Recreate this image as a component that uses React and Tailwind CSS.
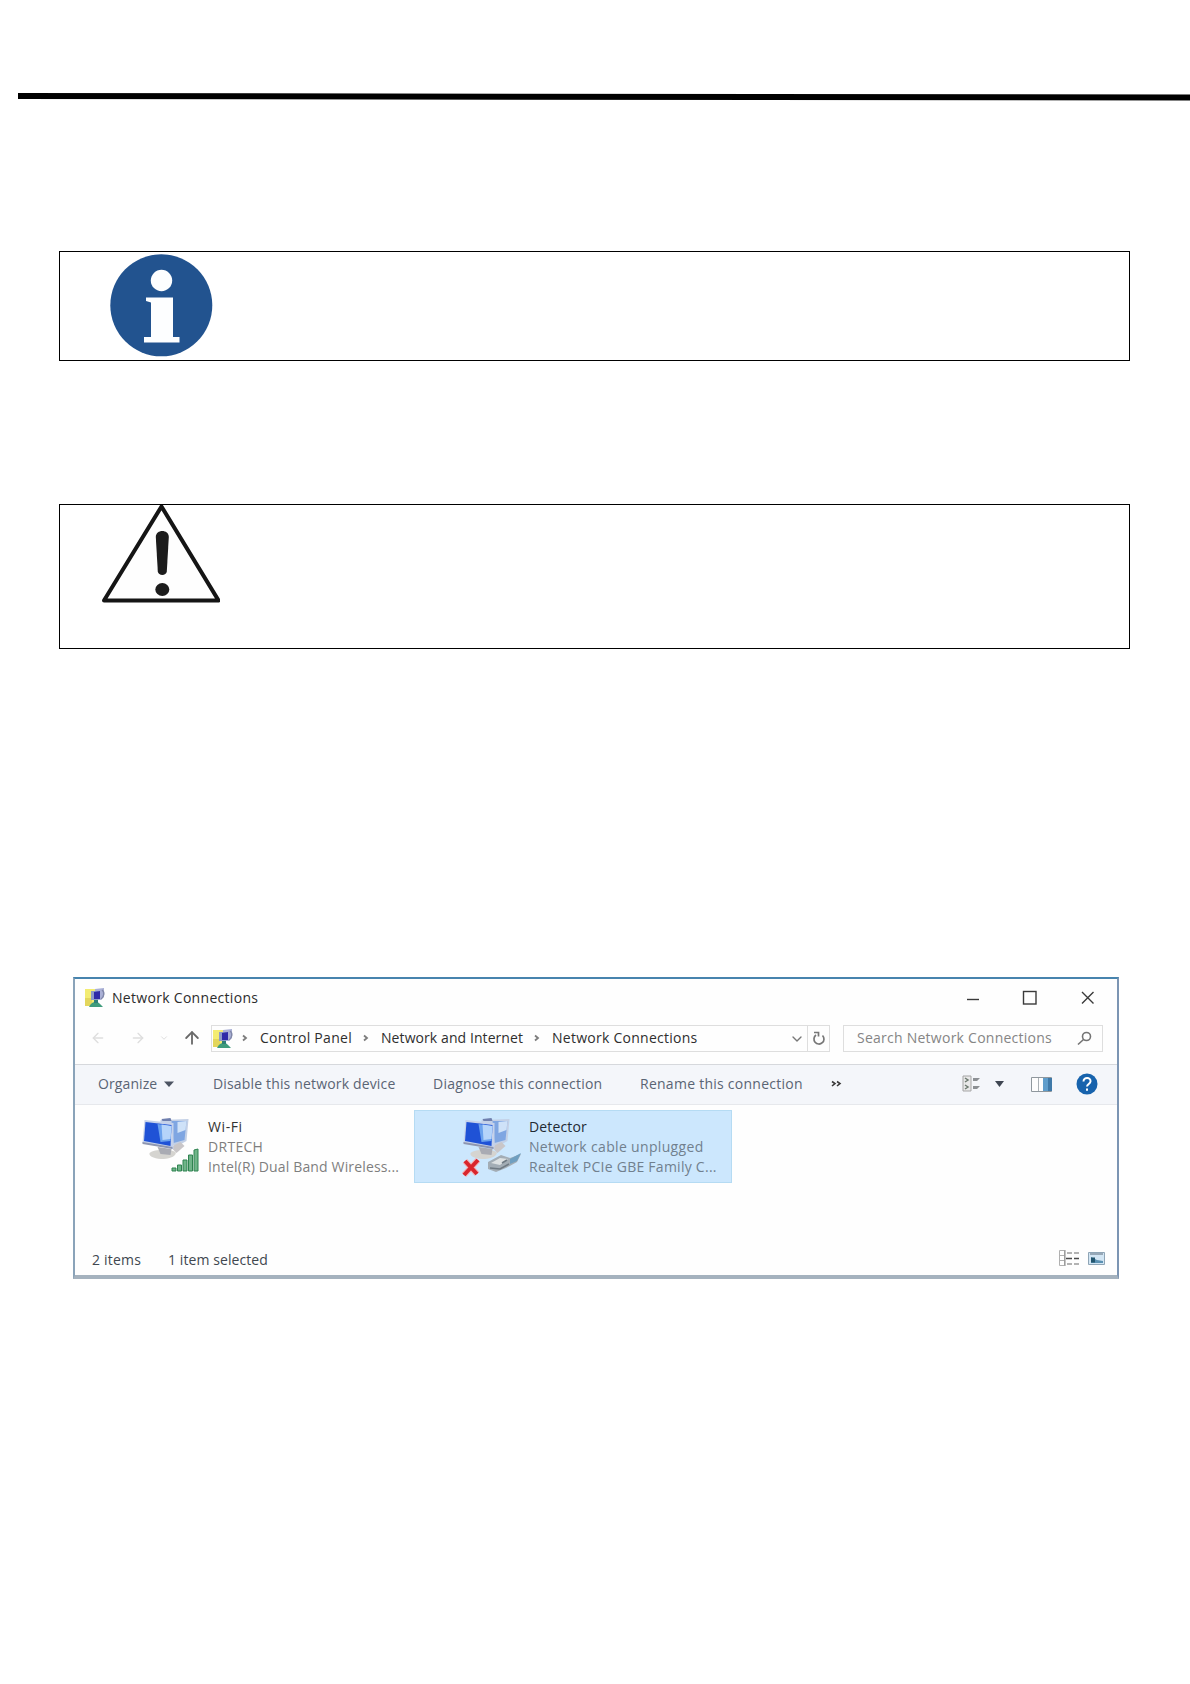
import { ArrowLeft, ArrowRight, ArrowUp, ChevronDown } from 'lucide-react';

const crumbs = [
  { name: 'Control Panel', width: 'w-[121px]', tracking: 'tracking-[0.28px]' },
  { name: 'Network and Internet', width: 'w-[171px]', tracking: 'tracking-[0.08px]' },
  { name: 'Network Connections', width: 'w-[180px]', tracking: 'tracking-[0.26px]' },
];

const commands = [
  { name: 'Disable this network device', width: 'w-[220px]', tracking: 'tracking-[0.16px]' },
  { name: 'Diagnose this connection', width: 'w-[207px]', tracking: 'tracking-[0.22px]' },
  { name: 'Rename this connection', width: 'w-[190px]', tracking: 'tracking-[0.26px]' },
];

function InfoIcon() {
  return (
    <svg width="104" height="104" viewBox="0 0 104 104">
      <circle cx="52.300" cy="52.300" r="51" fill="#22538f" />
      <circle cx="52.500" cy="27.500" r="10.700" fill="#fdfeff" />
      <path d="M37 44.500h27v39.500h6.500v5.500H35v-5.500h7V49.500l-5-1.500z" fill="#fdfeff" />
    </svg>
  );
}

function WarningIcon() {
  return (
    <svg width="118" height="98" viewBox="0 0 118 98">
      <path d="M2 95.500L59.500 1.500L116.500 95.500z" fill="#fefefe" stroke="#151515" strokeWidth="4" strokeLinejoin="round" />
      <path d="M53.800 32c0-8 13-8 13 0l-2 34.500c-.5 4.500-8.500 4.500-9 0z" fill="#1c1c1c" />
      <ellipse cx="60.300" cy="84.500" rx="7" ry="6.500" fill="#1c1c1c" />
    </svg>
  );
}

function NetworkIcon() {
  return (
    <svg width="22" height="22" viewBox="0 0 22 22" className="shrink-0">
      <rect x="1" y="2" width="12" height="17" fill="#f3ec72" />
      <rect x="1" y="11" width="7" height="8" fill="#e3d65c" />
      <path d="M11 2l9-1v9l-3 3h-6z" fill="#aab0d6" />
      <path d="M7 4h7v9H7z" fill="#8d9cc8" />
      <path d="M10 5l6-1v8h-6z" fill="#2f2ba8" />
      <path d="M18 3c3 2 2 7-1 9" fill="none" stroke="#8087a8" strokeWidth="1.500" />
      <path d="M5 20c2-4 4-5 7-5s4 2 7 5z" fill="#3f9c7c" />
      <path d="M10 13h4v3h-4z" fill="#2f7f78" />
    </svg>
  );
}

function Computers() {
  return (
    <g transform="translate(1.500 0)">
      <path d="M18 2l28-1-2 22-9 5-17-3z" fill="#c3d0e6" />
      <path d="M29 3l15 0-2 19-11 3z" fill="#7fa6e2" />
      <path d="M35 4l9-1-1 9-8 3z" fill="#cfe2f8" />
      <path d="M19 1l9-1 1 3h-9z" fill="#6f7fae" />
      <path d="M7 35c5-4 20-4 26-1 2 3-5 7-12 7S6 39 7 35z" fill="#d5d4d0" />
      <path d="M15 29l14 2-1 6-10-1z" fill="#a9abb3" />
      <path d="M28 29l10-5 4 4-8 7z" fill="#c9c6c8" />
      <path d="M2 2l29 3v26L0 25z" fill="#c6d2ea" />
      <path d="M3 4l26 3-1 21L1.500 23z" fill="#1f52d6" />
      <path d="M15 6l14 2-1 15-10 1z" fill="#6ba2ee" />
      <path d="M19 6.500l10 1.500-1 13-8 1z" fill="#b5d4fa" />
      <path d="M0 24l30 5v2L0 26z" fill="#8e96b0" />
    </g>
  );
}

function WifiIcon() {
  return (
    <svg width="60" height="58" viewBox="0 0 60 58" className="shrink-0">
      <Computers />
      <path d="M31 50h4v3h-4zM36.500 47h4v6h-4zM42 42h4v11h-4zM47.500 37h4v16h-4zM53 32l4-1v22h-4z" fill="#6fb488" stroke="#2f8350" />
    </svg>
  );
}

function UnpluggedIcon() {
  return (
    <svg width="60" height="60" viewBox="0 0 60 60" className="shrink-0">
      <Computers />
      <path d="M26 44l13-7 9 3 11-4-4 8-11 6-10 4-8-3z" fill="#a3adb5" />
      <path d="M29 45l9-5 8 1-8 6z" fill="#dde1e2" />
      <path d="M48 41l11-6-4 8-7 3z" fill="#6f9fc0" />
      <path d="M28 50l10 1 9-5M40 45l5-3" fill="none" stroke="#6f7a83" strokeWidth="1.500" />
      <path d="M3 43l12 13M16 42L2 57" stroke="#f3b3b6" strokeWidth="6" />
      <path d="M3 43l12 13M16 42L2 57" stroke="#d9252c" strokeWidth="4" />
    </svg>
  );
}

function TitleBar() {
  return (
    <div className="flex h-[37px] items-center pr-[16px] pl-[9px] text-[#2c2c2c]">
      <NetworkIcon />
      <span className="ml-[6px] flex-1 tracking-[0.3px] whitespace-nowrap">Network Connections</span>
      <svg width="140" height="20" viewBox="0 0 140 20" fill="none" stroke="#3a3a3a" strokeWidth="1.400">
        <path d="M6 11.500h12" />
        <rect x="62.500" y="3.500" width="12.500" height="12.500" />
        <path d="M121 4l11.500 11.500M132.500 4l-11.500 11.500" />
      </svg>
    </div>
  );
}

function AddressBar() {
  return (
    <div className="flex h-[48px] items-start pt-[9px]">
      <div className="flex h-[27px] w-[136px] shrink-0 items-center pb-[1px] pl-[15px]">
        <ArrowLeft size={16} color="#dedede" strokeWidth={2} />
        <ArrowRight size={16} color="#dedede" strokeWidth={2} className="ml-[24px]" />
        <ChevronDown size={10} color="#d8d8d8" className="ml-[13px]" />
        <ArrowUp size={20} color="#6a6a6a" strokeWidth={2.2} className="ml-[13px] shrink-0" />
      </div>
      <div className="flex h-[27px] w-[619px] shrink-0 items-center border border-[#dedede] text-[#2e2e2e]">
        <NetworkIcon />
        <div className="-ml-[1px] flex flex-1 pb-[2px]">
          {crumbs.map((c) => (
            <div key={c.name} className={`flex shrink-0 items-center ${c.width}`}>
              <svg width="27" height="10" viewBox="0 0 27 10" className="shrink-0">
                <path d="M10 2.500l3 2.500-3 2.500" fill="none" stroke="#7c7c7c" strokeWidth="1.800" />
              </svg>
              <span className={`whitespace-nowrap ${c.tracking}`}>{c.name}</span>
            </div>
          ))}
        </div>
        <ChevronDown size={16} color="#777777" className="shrink-0" />
        <div className="ml-[2px] flex h-full w-[22px] shrink-0 items-center justify-center border-l border-[#dedede]">
          <svg width="14" height="15" viewBox="0 0 14 15" fill="none" stroke="#777777" strokeWidth="1.700">
            <path d="M10.500 4.500A5 5 0 1 1 4 4M2 1.500h4.500v4" />
          </svg>
        </div>
      </div>
      <div className="ml-[13px] flex h-[27px] w-[260px] items-center border border-[#dedede] pr-[10px] pb-[1px] pl-[13px] text-[#858585]">
        <span className="flex-1 tracking-[0.25px] whitespace-nowrap">Search Network Connections</span>
        <svg width="15" height="15" viewBox="0 0 15 15" fill="none" stroke="#747474" strokeWidth="1.600">
          <circle cx="9.500" cy="5.500" r="4" />
          <path d="M6.500 8.500L1 13.500" />
        </svg>
      </div>
    </div>
  );
}

function Toolbar() {
  return (
    <div className="flex h-[41px] items-center border-y border-t-[#d6d8dc] border-b-[#e6e8ec] bg-[#f4f6fa] pb-[2px] pl-[23px] text-[#5a6474]">
      <div className="flex w-[115px] items-center gap-[7px]">
        <span className="tracking-[0.1px] whitespace-nowrap">Organize</span>
        <svg width="10" height="6" viewBox="0 0 10 6">
          <path d="M0 .5h10L5 6z" fill="#4c5462" />
        </svg>
      </div>
      {commands.map((c) => (
        <span key={c.name} className={`shrink-0 whitespace-nowrap ${c.width} ${c.tracking}`}>
          {c.name}
        </span>
      ))}
      <svg width="12" height="8" viewBox="0 0 12 8" fill="none" stroke="#3a3a3a" strokeWidth="1.600">
        <path d="M2 1.500l3 2L2 6M7 1.500l3 2L7 6" />
      </svg>
      <svg width="144" height="24" viewBox="0 0 144 24" className="ml-[119px]">
        <path d="M2 4h8v15H2z" fill="#e9e9e9" stroke="#a5a5a5" />
        <path d="M4 6l3 2-3 2M4 13l3 2-3 2" fill="none" stroke="#6d7a70" strokeWidth="1.500" />
        <path d="M12 6h7l-3 3h-4zM12 14h7l-3 3h-4z" fill="#8c9094" />
        <path d="M34 9h9l-4.500 6z" fill="#3f4652" />
        <path d="M70.500 5.500h20v14h-20z" fill="#fdfdfd" stroke="#8f979d" />
        <path d="M77.500 6v13" stroke="#aab0b5" />
        <path d="M82 6h9v13h-9z" fill="#5f9dcb" />
        <path d="M87 6h4v13h-4z" fill="#3f79a8" />
        <circle cx="126" cy="12" r="10.500" fill="#1763ad" />
        <path d="M122.500 9.500c0-5 7.500-4.500 7 0-.3 2.500-3.200 2.500-3.500 5M126 16.500v2.200" fill="none" stroke="#fff" strokeWidth="2" />
      </svg>
    </div>
  );
}

function Connections() {
  return (
    <div className="flex h-[138px] items-start pt-[5px] leading-5">
      <div className="flex h-[73px] w-[339px] shrink-0 pt-[8px] pl-[66px]">
        <WifiIcon />
        <div className="ml-[7px] whitespace-nowrap text-[#7e7e7e]">
          <p className="-mt-[1px] tracking-[0.6px] text-[#333333]">Wi-Fi</p>
          <p className="tracking-[0.3px]">DRTECH</p>
          <p className="tracking-[0.15px]">Intel(R) Dual Band Wireless...</p>
        </div>
      </div>
      <div className="flex h-[73px] w-[318px] shrink-0 border border-[#b5dbf3] bg-[#cce7fd] pt-[7px] pl-[47px]">
        <UnpluggedIcon />
        <div className="ml-[7px] whitespace-nowrap text-[#71808e]">
          <p className="-mt-[1px] tracking-[0.15px] text-[#1f2a33]">Detector</p>
          <p className="tracking-[0.33px]">Network cable unplugged</p>
          <p className="tracking-[0.26px]">Realtek PCIe GBE Family C...</p>
        </div>
      </div>
    </div>
  );
}

function StatusBar() {
  return (
    <div className="flex h-[32px] items-center pt-[1px] pr-[9px] pl-[17px] text-[#40474f]">
      <span className="w-[76px] tracking-[0.2px] whitespace-nowrap">2 items</span>
      <span className="flex-1 tracking-[0.08px] whitespace-nowrap">1 item selected</span>
      <svg width="51" height="18" viewBox="0 0 51 18" className="mb-[3px]">
        <path d="M2.500 1.500h5v15h-5zM2.500 6.500h5M2.500 11.500h5" fill="#fff" stroke="#b0b0b0" />
        <path d="M8 1v16" stroke="#8a8a8a" />
        <path d="M10 4h5M17 4h5M10 15h5M17 15h5" stroke="#9a9a9a" strokeWidth="1.300" />
        <path d="M9 9.500h6M17 9.500h5" stroke="#4a4a4a" strokeWidth="1.600" />
        <path d="M31.500 3.500h16v12h-16z" fill="#d3e6f4" stroke="#8fa5b6" />
        <path d="M33 5h13" stroke="#8393a3" strokeWidth="1.500" />
        <path d="M34 14V8l6 3 6 1v2z" fill="#5b91b3" />
        <path d="M34 8.500h4v5h-4z" fill="#23566f" />
      </svg>
    </div>
  );
}

export default function App() {
  return (
    <div className="h-[1684px] w-[1190px] overflow-hidden bg-white pt-[92px] font-['Open_Sans',sans-serif]">
      {/* Header rule */}
      <svg width="1190" height="10" viewBox="0 0 1190 10" className="block">
        <path d="M18 1L1190 2.600V8.600L18 7z" fill="#000" />
      </svg>

      {/* Notes */}
      <div className="mt-[149px] ml-[59px] h-[110px] w-[1071px] border border-black pt-[1px] pl-[49px]">
        <InfoIcon />
      </div>
      <div className="mt-[143px] ml-[59px] h-[145px] w-[1071px] border border-black pl-[42px]">
        <WarningIcon />
      </div>

      {/* Network Connections window */}
      <div className="mt-[328px] ml-[73px] h-[302px] w-[1046px] border-t-2 border-r-2 border-b-4 border-l-2 border-t-[#4784ae] border-r-[#7c95b3] border-b-[#a5b2be] border-l-[#8aa3b9] bg-[#fefefe] text-[14px] leading-5">
        <TitleBar />
        <AddressBar />
        <Toolbar />
        <Connections />
        <StatusBar />
      </div>
    </div>
  );
}
